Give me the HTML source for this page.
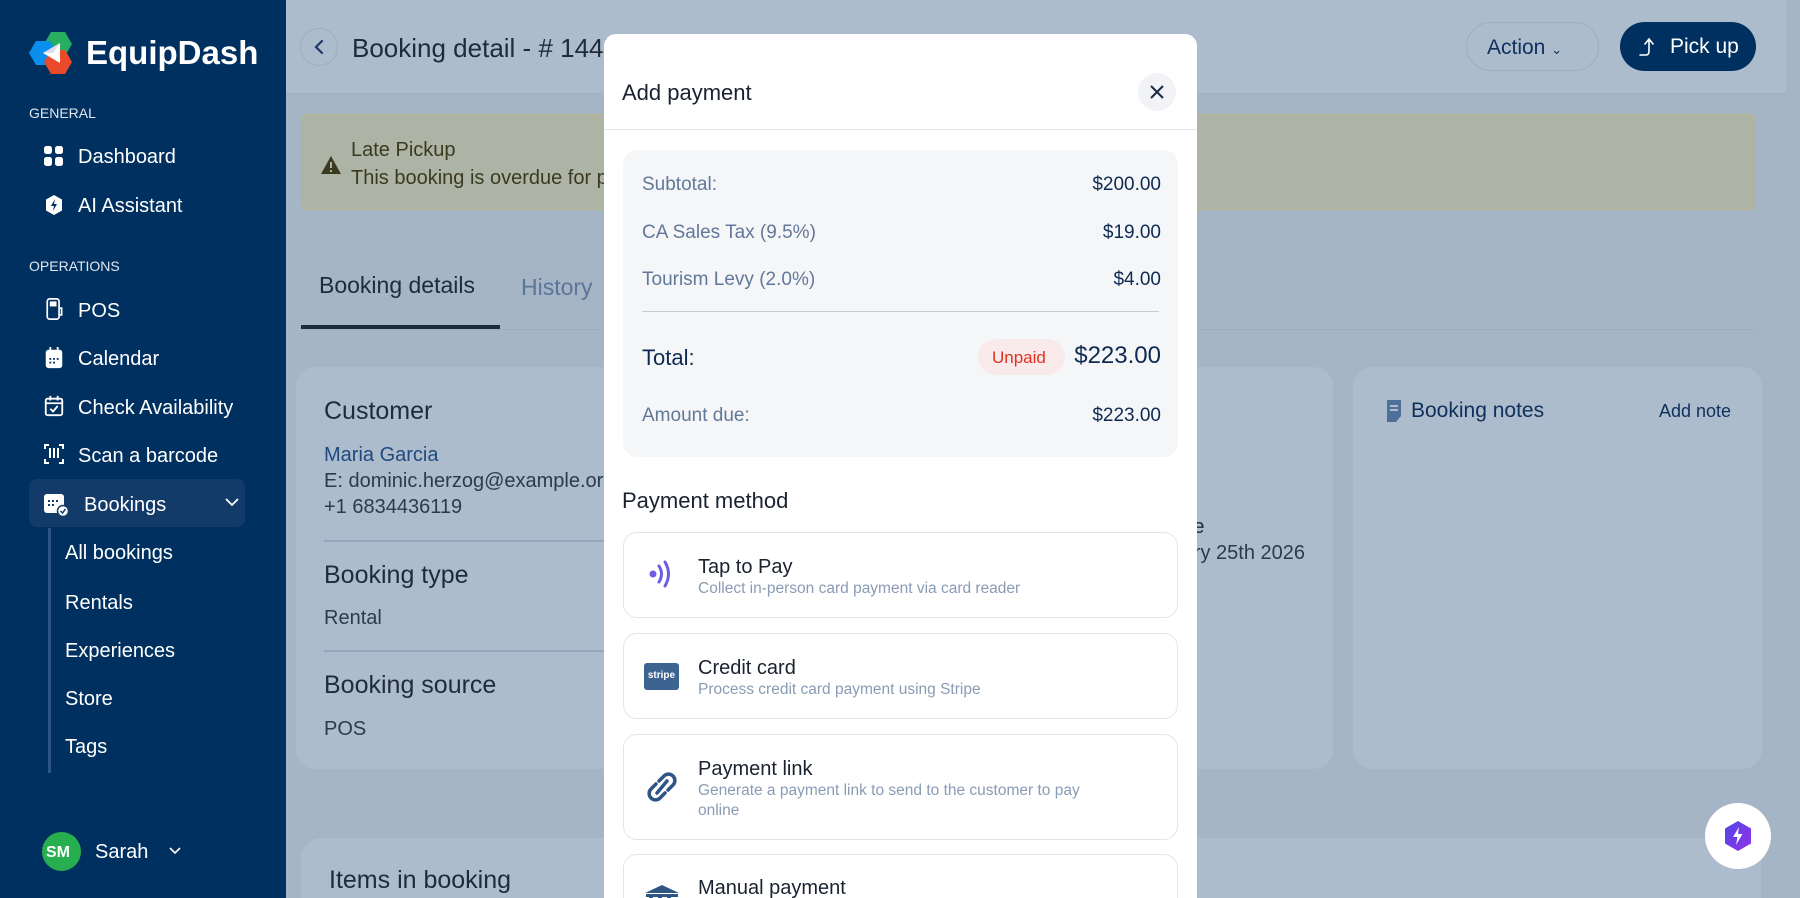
<!DOCTYPE html>
<html style="width:1800px;height:898px;overflow:hidden"><head><meta charset="utf-8"><style>
*{box-sizing:border-box;margin:0;padding:0}
body{width:1800px;height:898px;overflow:hidden;font-family:"Liberation Sans",sans-serif;background:#a6b5c6;position:relative}
.a{position:absolute;white-space:nowrap}
.sb{left:0;top:0;width:286px;height:898px;background:#00305f;overflow:hidden}
.sb .a{color:#fff}
.nav{font-size:20px;left:78px}
.sec{font-size:14px;left:29px;color:#dfe6ef!important}
.sub{font-size:20px;left:65px}
.ico{left:43px;width:22px;height:22px}
.modal{left:604px;top:34px;width:593px;height:864px;background:#fff;border-radius:12px 12px 0 0;overflow:hidden}
.lab{left:19px;color:#62789a;font-size:19px}
.val{right:17px;color:#0f2a52;font-size:19px}
.opt{left:19px;width:555px;border:1.5px solid #e2e6ec;border-radius:14px;background:#fff}
.ot{font-size:20px;color:#1a2230}
.os{font-size:15.5px;color:#8a9bb5}
</style></head><body>
<div class="a" style="left:286px;top:0;width:1500px;height:94px;background:#adbccc;border-bottom:1px solid #9fb0c2"></div>
<div class="a" style="left:1786px;top:0;width:14px;height:898px;background:#a6b5c6"></div>
<div class="a" style="left:300px;top:28px;width:38px;height:38px;border-radius:50%;border:1px solid #9cadc0"></div>
<svg class="a" style="left:310px;top:37px" width="20" height="20" viewBox="0 0 20 20"><path d="M12 4 L6 10 L12 16" fill="none" stroke="#1e3a66" stroke-width="2.2" stroke-linecap="round"/></svg>
<div class="a" style="left:352px;top:33px;font-size:26px;color:#1f2a3a">Booking detail - # 1445</div>
<div class="a" style="left:1466px;top:22px;width:133px;height:49px;border-radius:25px;border:1px solid #9cadc0;color:#0f2f5c;font-size:21px;padding:13px 0 0 20px">Action <span style="font-size:13px">&#8964;</span></div>
<div class="a" style="left:1620px;top:22px;width:136px;height:49px;border-radius:25px;background:#00305f;color:#fff;font-size:21px;padding:13px 0 0 50px">Pick up</div>
<svg class="a" style="left:1637px;top:35px" width="24" height="24" viewBox="0 0 24 24"><path d="M3 20 H9 Q12 20 12 16 V5 M8 9 L12 4 L16 9" fill="none" stroke="#fff" stroke-width="1.6" stroke-linecap="round"/></svg>
<div class="a" style="left:301px;top:114px;width:1455px;height:96px;background:#adb4a6;border:1px solid #b9b58e;border-radius:6px"></div>
<svg class="a" style="left:320px;top:155px" width="22" height="20" viewBox="0 0 22 20"><path d="M11 1 L21 19 H1 Z" fill="#3b3a20"/><rect x="10" y="7" width="2" height="6" fill="#adb4a6"/><rect x="10" y="15" width="2" height="2" fill="#adb4a6"/></svg>
<div class="a" style="left:351px;top:139px;font-size:20px;color:#3b3a20">Late Pickup</div>
<div class="a" style="left:351px;top:167px;font-size:20px;color:#3b3a20">This booking is overdue for pickup. It was scheduled for pickup on February 25th 2026.</div>
<div class="a" style="left:319px;top:272px;font-size:23px;color:#1f2a3a">Booking details</div>
<div class="a" style="left:521px;top:274px;font-size:23px;color:#5a7599">History</div>
<div class="a" style="left:301px;top:329px;width:1455px;height:1px;background:#9cadc0"></div>
<div class="a" style="left:301px;top:325px;width:199px;height:4px;background:#1f2c3d"></div>
<div class="a" style="left:296px;top:367px;width:1037px;height:402px;background:#adbccc;border-radius:20px"></div>
<div class="a" style="left:1353px;top:367px;width:409px;height:402px;background:#adbccc;border-radius:20px"></div>
<div class="a" style="left:301px;top:838px;width:1460px;height:60px;background:#adbccc;border-radius:20px 20px 0 0"></div>
<div class="a" style="left:324px;top:397px;font-size:25px;color:#1f2a3a">Customer</div>
<div class="a" style="left:324px;top:444px;font-size:20px;color:#1e4a80">Maria Garcia</div>
<div class="a" style="left:324px;top:470px;font-size:20px;color:#2e3a4a">E: dominic.herzog@example.org</div>
<div class="a" style="left:324px;top:496px;font-size:20px;color:#2e3a4a">+1 6834436119</div>
<div class="a" style="left:324px;top:540px;width:300px;height:2px;background:#95a7ba"></div>
<div class="a" style="left:324px;top:561px;font-size:25px;color:#1f2a3a">Booking type</div>
<div class="a" style="left:324px;top:607px;font-size:20px;color:#2e3a4a">Rental</div>
<div class="a" style="left:324px;top:650px;width:300px;height:2px;background:#95a7ba"></div>
<div class="a" style="left:324px;top:671px;font-size:25px;color:#1f2a3a">Booking source</div>
<div class="a" style="left:324px;top:718px;font-size:20px;color:#2e3a4a">POS</div>
<div class="a" style="left:1100px;top:516px;width:103px;text-align:right;font-size:20px;color:#1f2a3a">Pickup date</div>
<div class="a" style="left:1005px;top:542px;width:300px;text-align:right;font-size:20px;color:#2e3a4a">February 25th 2026</div>
<svg class="a" style="left:1385px;top:399px" width="18" height="24" viewBox="0 0 18 24"><path d="M2 1 H16 V17 L11 23 H2 Z" fill="#4d6f98"/><rect x="5" y="6" width="8" height="2" fill="#adbccc"/><rect x="5" y="10" width="8" height="2" fill="#adbccc"/></svg>
<div class="a" style="left:1411px;top:399px;font-size:21px;color:#0f2f5c">Booking notes</div>
<div class="a" style="left:1659px;top:401px;font-size:18px;color:#0f2f5c">Add note</div>
<div class="a" style="left:329px;top:866px;font-size:25px;color:#1f2a3a">Items in booking</div>
<div class="a" style="left:1705px;top:803px;width:66px;height:66px;border-radius:50%;background:#fff"></div>
<svg class="a" style="left:1723px;top:820px" width="30" height="32" viewBox="0 0 30 32"><defs><linearGradient id="g" x1="0" y1="0" x2="1" y2="1"><stop offset="0" stop-color="#4f46e5"/><stop offset="1" stop-color="#9333ea"/></linearGradient></defs><path d="M15 1 L28 8.5 V23.5 L15 31 L2 23.5 V8.5 Z" fill="url(#g)"/><path d="M16 7 L10 17 H14.5 L13 25 L19.5 14 H15 Z" fill="#fff"/></svg>
<div class="a sb">
<svg class="a" style="left:29px;top:32px" width="44" height="42" viewBox="0 0 44 42"><path d="M22 0 H36 L43 12 L36 24 H22 L15 12 Z" fill="#27ae60"/><path d="M7 9 H21 L28 21 L21 33 H7 L0 21 Z" fill="#0a8fef"/><path d="M22 18 H36 L43 30 L36 42 H22 L15 30 Z" fill="#e94b2a"/><path d="M14 21 L31 11 V31 Z" fill="#fff"/><path d="M14 21 L31 11 L24 21 Z" fill="#dde"/></svg>
<div class="a" style="left:86px;top:34px;font-size:33px;font-weight:bold;color:#fff">EquipDash</div>
<div class="a sec" style="top:105px">GENERAL</div>
<svg class="a ico" style="top:145px" viewBox="0 0 22 22"><rect x="1" y="1" width="8" height="8" rx="2.5" fill="#fff"/><rect x="12" y="1" width="8" height="8" rx="2.5" fill="#fff"/><rect x="1" y="12" width="8" height="9" rx="2.5" fill="#fff"/><rect x="12" y="12" width="8" height="9" rx="2.5" fill="#fff"/></svg>
<div class="a nav" style="top:146px">Dashboard</div>
<svg class="a ico" style="top:194px" viewBox="0 0 22 22"><path d="M11 1 L19 5.5 V16.5 L11 21 L3 16.5 V5.5 Z" fill="#fff"/><path d="M12 5 L8 12 H11 L10 17 L14 10 H11 Z" fill="#00305f"/></svg>
<div class="a nav" style="top:195px">AI Assistant</div>
<div class="a sec" style="top:258px">OPERATIONS</div>
<svg class="a ico" style="top:298px" viewBox="0 0 22 26"><rect x="3" y="1" width="14" height="24" rx="3" fill="none" stroke="#fff" stroke-width="2"/><rect x="6" y="4" width="8" height="6" fill="#fff"/><path d="M18 12 h2 v8 h-2" fill="none" stroke="#fff" stroke-width="2"/></svg>
<div class="a nav" style="top:300px">POS</div>
<svg class="a ico" style="top:347px" viewBox="0 0 22 24"><rect x="2" y="3" width="18" height="20" rx="3" fill="#fff"/><rect x="6" y="0" width="2" height="5" fill="#fff"/><rect x="14" y="0" width="2" height="5" fill="#fff"/><g fill="#00305f"><rect x="6" y="12" width="2" height="2"/><rect x="10" y="12" width="2" height="2"/><rect x="14" y="12" width="2" height="2"/><rect x="6" y="16" width="2" height="2"/><rect x="10" y="16" width="2" height="2"/></g></svg>
<div class="a nav" style="top:348px">Calendar</div>
<svg class="a ico" style="top:395px" viewBox="0 0 22 24"><rect x="2" y="4" width="18" height="18" rx="2" fill="none" stroke="#fff" stroke-width="2"/><path d="M2 9 H20 M7 1 V6 M15 1 V6 M7 15 L10 18 L15 12" fill="none" stroke="#fff" stroke-width="2"/></svg>
<div class="a nav" style="top:397px">Check Availability</div>
<svg class="a ico" style="top:443px" viewBox="0 0 22 22"><path d="M2 6 V2 H6 M16 2 H20 V6 M2 16 V20 H6 M16 20 H20 V16 M7 5 V15 M11 5 V15 M15 5 V15" fill="none" stroke="#fff" stroke-width="2"/></svg>
<div class="a nav" style="top:445px">Scan a barcode</div>
<div class="a" style="left:29px;top:479px;width:216px;height:48px;border-radius:8px;background:#123b69"></div>
<svg class="a" style="left:43px;top:491px" width="26" height="26" viewBox="0 0 26 26"><rect x="1" y="3" width="20" height="19" rx="3" fill="#fff"/><circle cx="20" cy="20" r="5.5" fill="#fff" stroke="#123b69" stroke-width="1.5"/><path d="M17.5 20 L19.5 22 L22.5 18" stroke="#123b69" stroke-width="1.5" fill="none"/><g fill="#123b69"><rect x="5" y="9" width="2" height="2"/><rect x="9" y="9" width="2" height="2"/><rect x="13" y="9" width="2" height="2"/><rect x="5" y="13" width="2" height="2"/><rect x="9" y="13" width="2" height="2"/></g></svg>
<div class="a" style="left:84px;top:494px;font-size:20px">Bookings</div>
<svg class="a" style="left:224px;top:496px" width="16" height="12" viewBox="0 0 16 12"><path d="M2 3 L8 9 L14 3" fill="none" stroke="#fff" stroke-width="1.8"/></svg>
<div class="a" style="left:48px;top:528px;width:3px;height:245px;background:#2d5584"></div>
<div class="a sub" style="top:542px">All bookings</div>
<div class="a sub" style="top:592px">Rentals</div>
<div class="a sub" style="top:640px">Experiences</div>
<div class="a sub" style="top:688px">Store</div>
<div class="a sub" style="top:736px">Tags</div>
<div class="a" style="left:42px;top:832px;width:39px;height:39px;border-radius:50%;background:#27ae4f;font-size:16px;font-weight:bold;padding:12px 0 0 4px">SM</div>
<div class="a" style="left:95px;top:841px;font-size:20px">Sarah</div>
<svg class="a" style="left:168px;top:846px" width="14" height="10" viewBox="0 0 14 10"><path d="M2 2 L7 7 L12 2" fill="none" stroke="#fff" stroke-width="1.6"/></svg>
</div>
<div class="a modal">
<div class="a" style="left:18px;top:46px;font-size:22px;color:#1a2230">Add payment</div>
<div class="a" style="left:534px;top:39px;width:38px;height:38px;border-radius:50%;background:#f1f3f7"></div>
<svg class="a" style="left:544px;top:49px" width="18" height="18" viewBox="0 0 18 18"><path d="M3 3 L15 15 M15 3 L3 15" stroke="#1a2a44" stroke-width="2"/></svg>
<div class="a" style="left:0;top:95px;width:593px;height:1px;background:#e3e7ec"></div>
<div class="a" style="left:19px;top:116px;width:555px;height:307px;background:#f5f6f8;border-radius:14px">
<div class="a lab" style="top:24px">Subtotal:</div><div class="a val" style="top:24px">$200.00</div>
<div class="a lab" style="top:72px">CA Sales Tax (9.5%)</div><div class="a val" style="top:72px">$19.00</div>
<div class="a lab" style="top:119px">Tourism Levy (2.0%)</div><div class="a val" style="top:119px">$4.00</div>
<div class="a" style="left:19px;top:161px;width:517px;height:1px;background:#c4ccd6"></div>
<div class="a" style="left:19px;top:195px;font-size:22px;color:#0f2a52">Total:</div>
<div class="a" style="left:355px;top:189px;width:87px;height:36px;border-radius:18px;background:#f8e9ea;color:#e0321f;font-size:17px;padding:9px 0 0 14px">Unpaid</div>
<div class="a" style="right:17px;top:192px;font-size:24px;color:#0f2a52">$223.00</div>
<div class="a lab" style="top:255px">Amount due:</div><div class="a val" style="top:255px">$223.00</div>
</div>
<div class="a" style="left:18px;top:454px;font-size:22px;color:#1a2230">Payment method</div>
<div class="a opt" style="top:498px;height:86px"></div>
<svg class="a" style="left:42px;top:518px" width="30" height="44" viewBox="0 0 30 44"><circle cx="7" cy="22" r="3.5" fill="#6d5ce8"/><path d="M13 14 Q18 22 13 30" fill="none" stroke="#6d5ce8" stroke-width="3" stroke-linecap="round"/><path d="M19 10 Q26 22 19 34" fill="none" stroke="#6d5ce8" stroke-width="3" stroke-linecap="round"/></svg>
<div class="a ot" style="left:94px;top:522px">Tap to Pay</div>
<div class="a os" style="left:94px;top:546px">Collect in-person card payment via card reader</div>
<div class="a opt" style="top:599px;height:86px"></div>
<div class="a" style="left:40px;top:629px;width:35px;height:27px;border-radius:3px;background:#3d6391;color:#fff;font-size:10px;font-weight:bold;text-align:center;padding-top:7px">stripe</div>
<div class="a ot" style="left:94px;top:623px">Credit card</div>
<div class="a os" style="left:94px;top:647px">Process credit card payment using Stripe</div>
<div class="a opt" style="top:700px;height:106px"></div>
<svg class="a" style="left:40px;top:734px" width="36" height="38" viewBox="0 0 36 38"><path d="M15 13 L20 8 A6 6 0 0 1 29 17 L24 22 M21 25 L16 30 A6 6 0 0 1 7 21 L12 16 M13 25 L23 13" fill="none" stroke="#2e5584" stroke-width="3.5" stroke-linecap="round"/></svg>
<div class="a ot" style="left:94px;top:724px">Payment link</div>
<div class="a os" style="left:94px;top:748px">Generate a payment link to send to the customer to pay</div>
<div class="a os" style="left:94px;top:768px">online</div>
<div class="a opt" style="top:820px;height:60px"></div>
<svg class="a" style="left:40px;top:850px" width="36" height="20" viewBox="0 0 36 20"><path d="M18 1 L35 9 H1 Z" fill="#2e5584"/><rect x="2" y="10" width="32" height="3" fill="#2e5584"/><rect x="5" y="13" width="4" height="7" fill="#2e5584"/><rect x="14" y="13" width="4" height="7" fill="#2e5584"/><rect x="23" y="13" width="4" height="7" fill="#2e5584"/></svg>
<div class="a ot" style="left:94px;top:843px">Manual payment</div>
</div>
</body></html>
